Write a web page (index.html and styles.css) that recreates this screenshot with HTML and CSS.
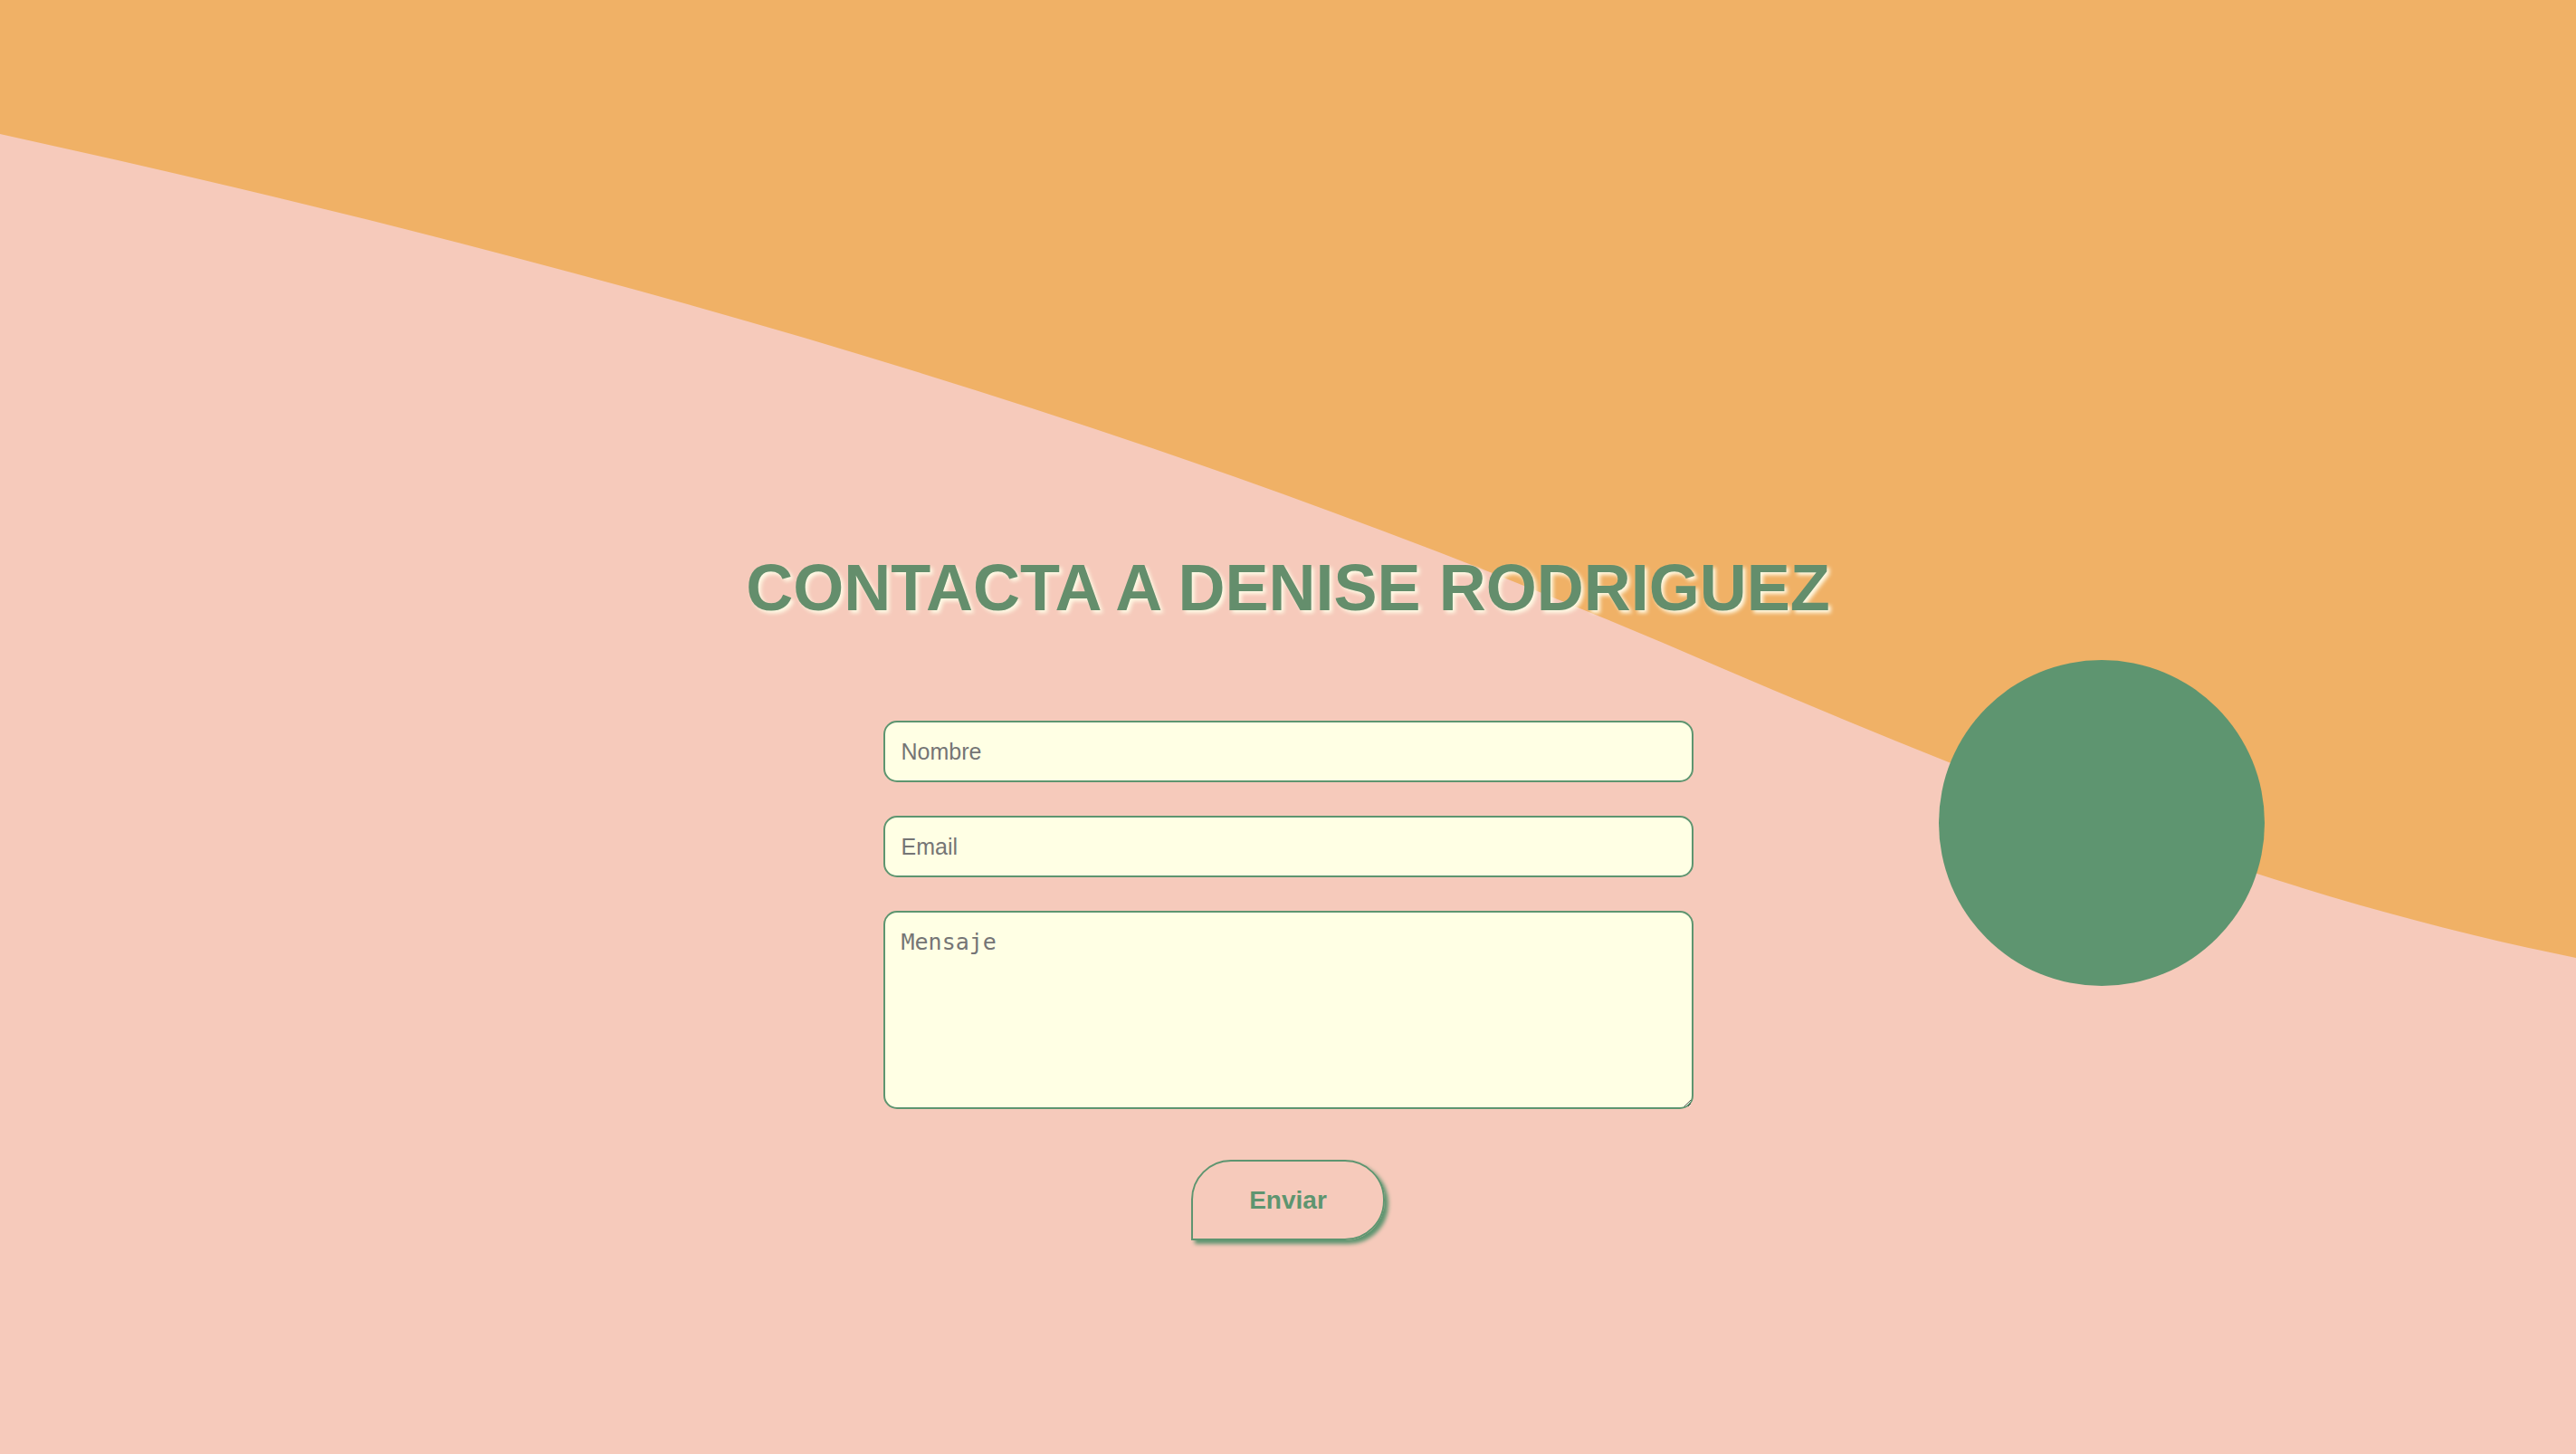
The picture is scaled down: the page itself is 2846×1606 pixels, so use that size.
FILE: index.html
```html
<!DOCTYPE html>
<html lang="es">
<head>
<meta charset="utf-8">
<title>Contacta a Denise Rodriguez</title>
<link rel="stylesheet" href="styles.css">
</head>
<body>
<svg class="wave" viewBox="0 0 2846 1606" preserveAspectRatio="none" aria-hidden="true">
  <path d="M0,0 L2846,0 L2846,1058 C2531,995 2215,872 1900,737 C1267,462 633,287 0,148 Z" fill="#f0b166"/>
</svg>
<div class="dot" aria-hidden="true"></div>
<main class="page">
  <h1 class="title">CONTACTA A DENISE RODRIGUEZ</h1>
  <form class="contact">
    <input class="field" type="text" placeholder="Nombre">
    <input class="field" type="email" placeholder="Email">
    <textarea class="field area" placeholder="Mensaje"></textarea>
    <button class="send" type="button">Enviar</button>
  </form>
</main>
</body>
</html>
```

FILE: styles.css
```css
html, body {
  margin: 0;
  padding: 0;
}
body {
  background: #f6cabb;
  min-height: 100vh;
  position: relative;
  overflow: hidden;
  font-family: "Liberation Sans", Arial, sans-serif;
}
.wave {
  position: absolute;
  left: 0;
  top: 0;
  width: 100%;
  height: 1606px;
  display: block;
}
.dot {
  position: absolute;
  left: 2142px;
  top: 729px;
  width: 360px;
  height: 360px;
  border-radius: 50%;
  background: #5e9570;
}
.page {
  position: relative;
  display: flex;
  flex-direction: column;
  align-items: center;
  padding-top: 609px;
}
.title {
  margin: 0;
  font-family: "Liberation Sans", Arial, sans-serif;
  font-weight: 700;
  font-size: 72px;
  line-height: 80px;
  color: #648e6c;
  text-shadow: 3px 3px 4px #fffbe6;
  white-space: nowrap;
}
.contact {
  margin-top: 107px;
  width: 895px;
  display: flex;
  flex-direction: column;
  align-items: center;
  gap: 37px;
}
.field {
  box-sizing: border-box;
  width: 100%;
  height: 68px;
  margin: 0;
  padding: 18px;
  border: 2px solid #5e9570;
  border-radius: 15px;
  background: #ffffe4;
  font-family: "Liberation Sans", Arial, sans-serif;
  font-size: 25px;
  color: #333;
  outline: none;
}
.field::placeholder {
  color: #757575;
  opacity: 1;
}
.area {
  height: 219px;
  font-family: "DejaVu Sans Mono", monospace;
  display: block;
  resize: both;
}
.send {
  margin-top: 19px;
  box-sizing: border-box;
  width: 214px;
  height: 89px;
  border: 2px solid #5e9570;
  border-radius: 44px 44px 44px 0;
  background: transparent;
  box-shadow: 4px 4px 4px #5e9570;
  font-family: "Liberation Sans", Arial, sans-serif;
  font-weight: 700;
  font-size: 28px;
  color: #5e9570;
  cursor: pointer;
  padding: 0;
}
```
